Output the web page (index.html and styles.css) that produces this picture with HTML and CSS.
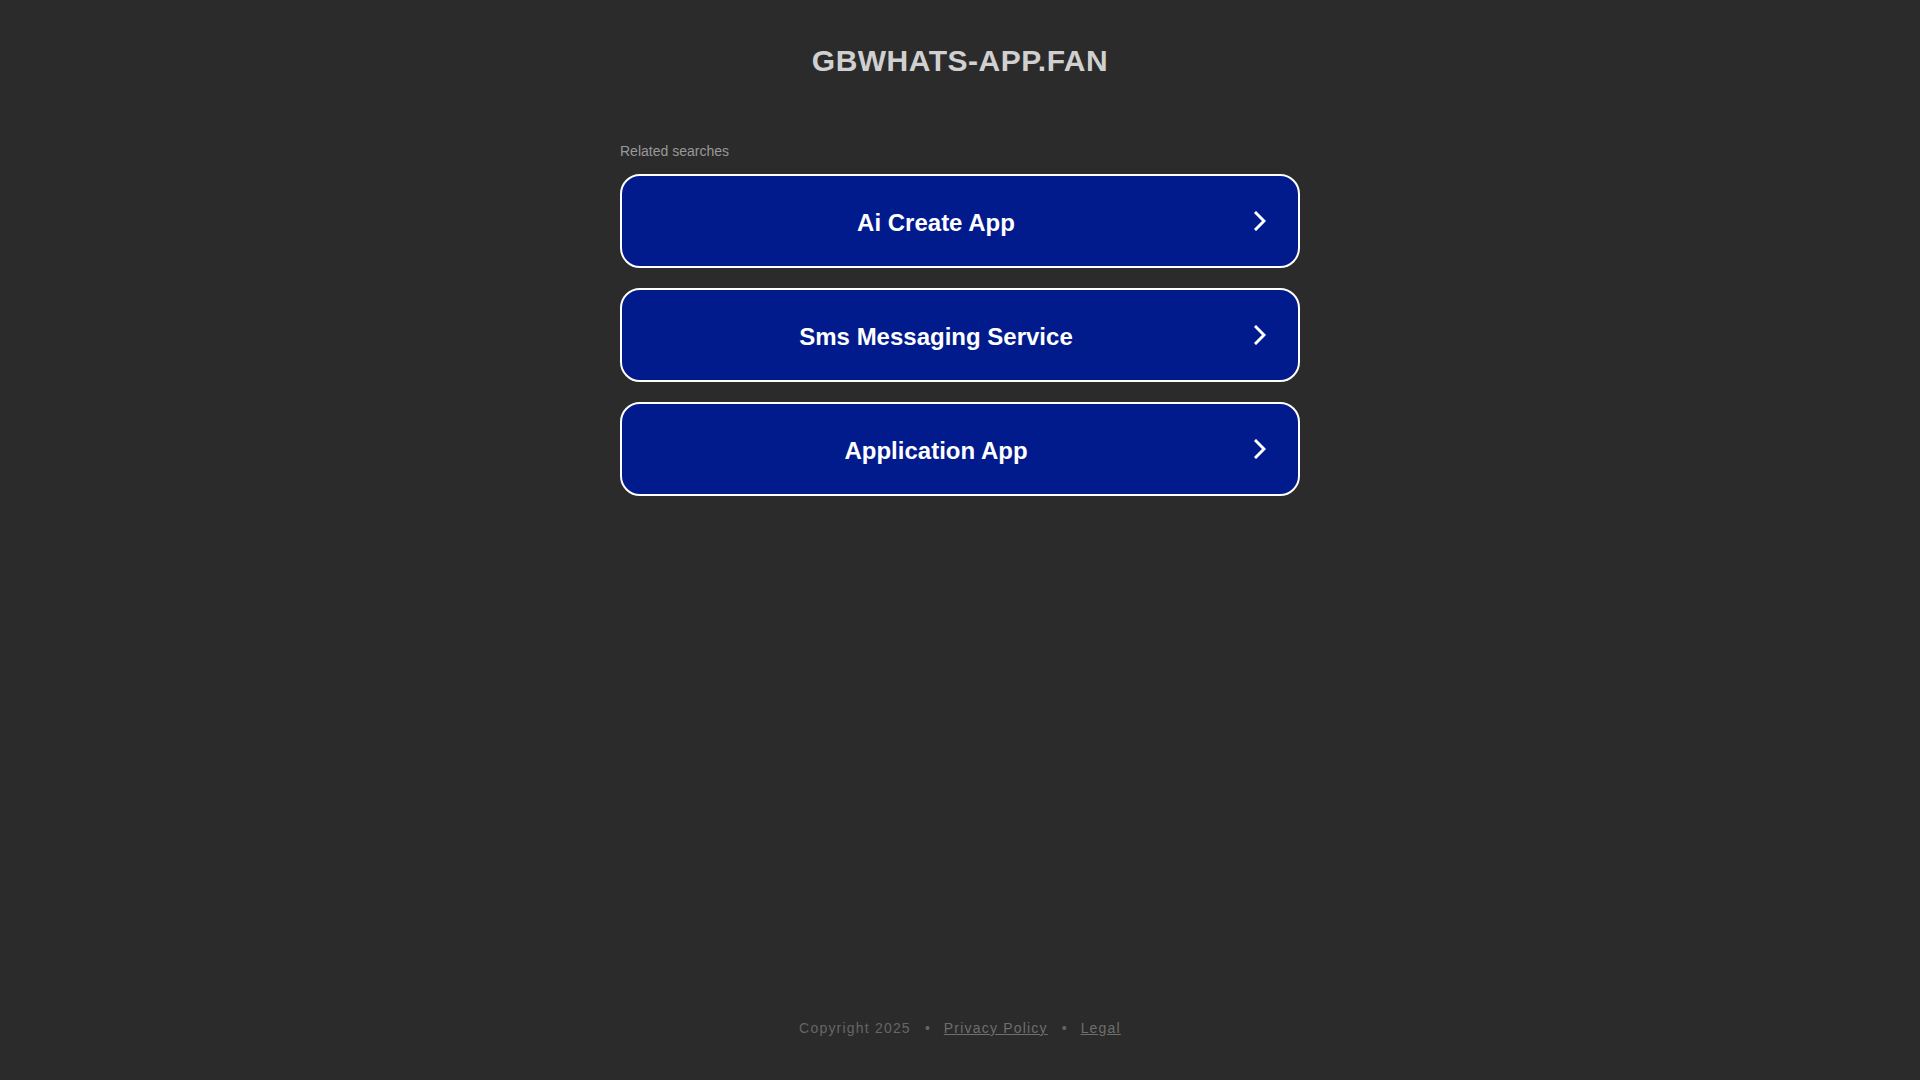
FILE: index.html
```html
<!DOCTYPE html>
<html lang="en">
<head>
<meta charset="utf-8">
<title>gbwhats-app.fan</title>
<link rel="stylesheet" href="styles.css">
</head>
<body>
<div class="page">
  <header class="header">
    <h1 class="domain">gbwhats-app.fan</h1>
  </header>
  <main class="content">
    <p class="related">Related searches</p>
    <ul class="ads">
      <li><a class="ad" href="#"><span class="ad-text">Ai Create App</span><svg class="chev" viewBox="0 0 12 20" width="12" height="20"><path d="M2 2 L10 10 L2 18" fill="none" stroke="#fff" stroke-width="3" stroke-linecap="square"/></svg></a></li>
      <li><a class="ad" href="#"><span class="ad-text">Sms Messaging Service</span><svg class="chev" viewBox="0 0 12 20" width="12" height="20"><path d="M2 2 L10 10 L2 18" fill="none" stroke="#fff" stroke-width="3" stroke-linecap="square"/></svg></a></li>
      <li><a class="ad" href="#"><span class="ad-text">Application App</span><svg class="chev" viewBox="0 0 12 20" width="12" height="20"><path d="M2 2 L10 10 L2 18" fill="none" stroke="#fff" stroke-width="3" stroke-linecap="square"/></svg></a></li>
    </ul>
  </main>
  <footer class="footer">
    <span>Copyright 2025</span>
    <span class="sep">•</span>
    <a href="#">Privacy Policy</a>
    <span class="sep">•</span>
    <a href="#">Legal</a>
  </footer>
</div>
</body>
</html>
```
FILE: styles.css
```css
html, body {
  margin: 0;
  padding: 0;
  background: #2b2b2b;
  font-family: "Liberation Sans", Arial, sans-serif;
}
.page {
  min-height: 100vh;
  display: flex;
  flex-direction: column;
  align-items: center;
}
.header {
  padding-top: 43px;
}
.domain {
  margin: 0;
  font-size: 30px;
  line-height: 36px;
  font-weight: 700;
  letter-spacing: 0.5px;
  text-transform: uppercase;
  color: #d0d0d0;
  text-align: center;
}
.content {
  width: 680px;
  padding-top: 63px;
}
.related {
  margin: 0 0 14px 0;
  font-size: 14px;
  line-height: 18px;
  color: #999;
}
.ads {
  list-style: none;
  margin: 0;
  padding: 0;
  display: flex;
  flex-direction: column;
  gap: 20px;
}
.ad {
  display: flex;
  align-items: center;
  height: 90px;
  padding: 0 26px 0 15px;
  box-sizing: content-box;
  border: 2px solid #fff;
  border-radius: 20px;
  background: #011a8c;
  text-decoration: none;
}
.ad-text {
  flex: 1;
  text-align: center;
  font-size: 24px;
  font-weight: 700;
  color: #fff;
  padding-top: 3px;
}
.chev {
  flex: none;
  margin-left: 19px;
  margin-right: 6px;
}
.footer {
  margin-top: auto;
  padding-bottom: 42px;
  display: flex;
  align-items: center;
  gap: 12px;
  font-size: 14px;
  line-height: 20px;
  letter-spacing: 1.2px;
  color: #666;
}
.footer a {
  color: #6e6e6e;
  text-decoration: underline;
}
.sep {
  letter-spacing: 0;
  padding: 0 2px;
}
```
